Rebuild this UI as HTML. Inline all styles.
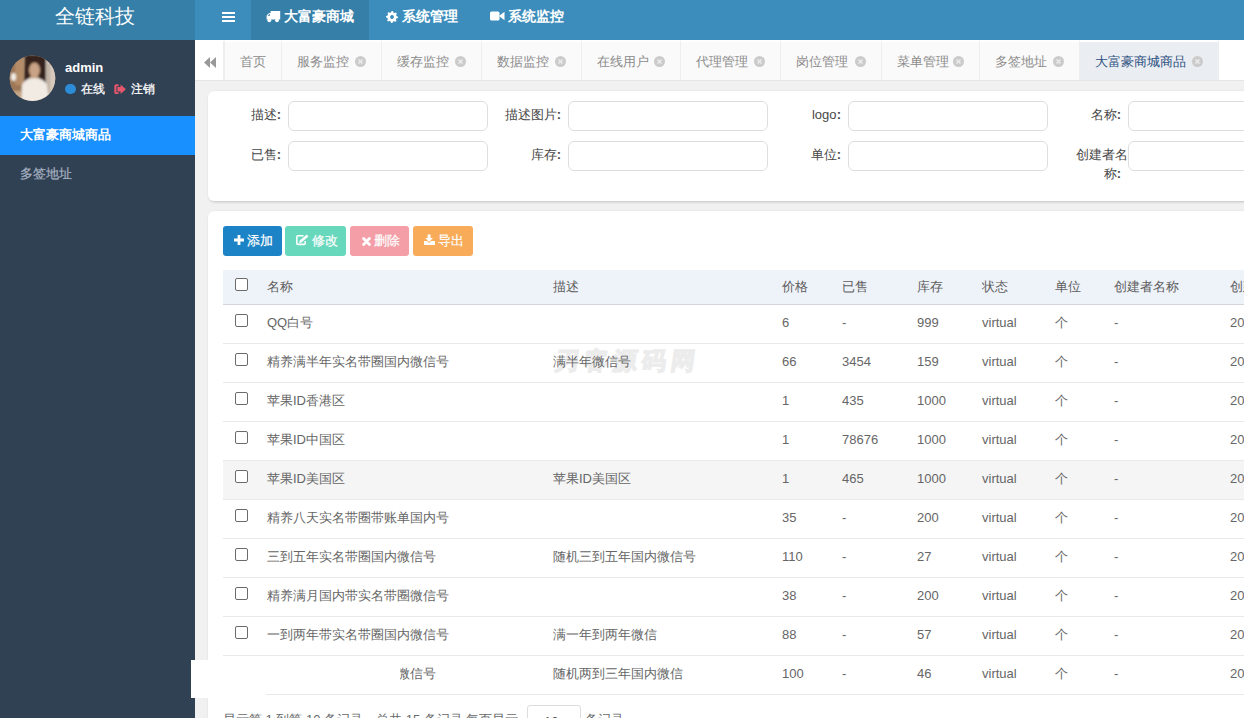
<!DOCTYPE html>
<html><head><meta charset="utf-8">
<style>
*{box-sizing:border-box;margin:0;padding:0}
html,body{width:1244px;height:718px;overflow:hidden;background:#f1f1f1;font-family:"Liberation Sans",sans-serif;font-size:13px;color:#676a6c}
.abs,.t{position:absolute;white-space:nowrap}
.t{line-height:20px}
.card{position:absolute;background:#fff;border-radius:6px;box-shadow:1px 1px 3px rgba(0,0,0,.2)}
.inp{position:absolute;width:200px;height:30px;border:1px solid #dedede;border-radius:6px;background:#fff}
.btn{position:absolute;top:226px;height:30px;border-radius:3px}
.cb{position:absolute;width:13px;height:13px;border:1px solid #6b6b6b;border-radius:2px;background:#fff}
.ln{position:absolute;left:223px;width:1021px;height:1px;background:#e7eaec}
.co{display:inline-block;width:4.5px;font-weight:bold;text-indent:0.3px}
.c{position:absolute;white-space:nowrap;color:#666;line-height:20px}
</style></head><body>

<div class="abs" style="left:0;top:0;width:195px;height:40px;background:#367fa9"></div>
<div class="t" style="left:55px;top:6px;font-size:20px;line-height:20px;color:#fff">全链科技</div>
<div class="abs" style="left:195px;top:0;width:1049px;height:40px;background:#3c8dbc"></div>
<div class="abs" style="left:222px;top:12px;width:13px;height:2px;background:#fff"></div>
<div class="abs" style="left:222px;top:16px;width:13px;height:2px;background:#fff"></div>
<div class="abs" style="left:222px;top:20px;width:13px;height:2px;background:#fff"></div>
<div class="abs" style="left:251px;top:0;width:118px;height:40px;background:#367fa9"></div>
<svg class="abs" style="left:266px;top:10px" width="15" height="13" viewBox="0 0 15 13"><g fill="#fff">
<rect x="4.6" y="1" width="9.6" height="8.6" rx="0.6"/>
<path d="M0.6 9.6 V6.2 Q0.6 5.4 1.2 4.8 L2.6 3.4 Q3.1 3 3.8 3 H5 V9.6 Z"/>
<circle cx="3.3" cy="10.3" r="1.9"/><circle cx="11" cy="10.3" r="1.9"/>
</g><path d="M1.6 5.8 L3 4.2 H4 V5.8 Z" fill="#367fa9"/></svg>
<div class="t" style="left:284px;top:6px;font-size:14px;font-weight:bold;color:#fff">大富豪商城</div>
<svg class="abs" style="left:386px;top:10.5px" width="12" height="12" viewBox="0 0 12 12"><path fill="#fff" fill-rule="evenodd" d="M5.71,0.01 L6.88,0.06 L7.55,1.67 L8.36,2.05 L10.03,1.55 L10.82,2.43 L10.16,4.03 L10.46,4.88 L11.99,5.71 L11.94,6.88 L10.33,7.55 L9.95,8.36 L10.45,10.03 L9.57,10.82 L7.97,10.16 L7.12,10.46 L6.29,11.99 L5.12,11.94 L4.45,10.33 L3.64,9.95 L1.97,10.45 L1.18,9.57 L1.84,7.97 L1.54,7.12 L0.01,6.29 L0.06,5.12 L1.67,4.45 L2.05,3.64 L1.55,1.97 L2.43,1.18 L4.03,1.84 L4.88,1.54 Z M6 4.1 A1.9 1.9 0 1 0 6.001 4.1 Z"/></svg>
<div class="t" style="left:402px;top:6px;font-size:14px;font-weight:bold;color:#fff">系统管理</div>
<svg class="abs" style="left:490px;top:11px" width="15" height="10" viewBox="0 0 15 10"><rect x="0" y="0.5" width="9.5" height="9" rx="1.6" fill="#fff"/><path d="M9 5 L14.5 0.8 V9.2 Z" fill="#fff"/></svg>
<div class="t" style="left:508px;top:6px;font-size:14px;font-weight:bold;color:#fff">系统监控</div>
<div class="abs" style="left:0;top:40px;width:195px;height:678px;background:#314154"></div>
<svg class="abs" style="left:9px;top:55px" width="47" height="47" viewBox="0 0 47 47">
<defs><clipPath id="av"><circle cx="23.5" cy="23.3" r="22.8"/></clipPath><filter id="bl"><feGaussianBlur stdDeviation="1.1"/></filter></defs>
<g clip-path="url(#av)"><rect width="47" height="47" fill="#b89677"/>
<g filter="url(#bl)">
<rect x="-2" y="-2" width="15" height="50" fill="#9c7656"/>
<rect x="6" y="4" width="8" height="26" fill="#b48c68"/>
<rect x="35" y="-2" width="14" height="50" fill="#d6cabe"/>
<rect x="38" y="8" width="3" height="30" fill="#bfb1a3"/>
<ellipse cx="4.5" cy="22" rx="2.5" ry="4" fill="#f2eee8"/>
<path d="M16 0 H37 V30 H33 Q31 20 25 20 Q19 20 18 30 H15 Z" fill="#34231a"/>
<ellipse cx="25.5" cy="15" rx="5.5" ry="7.5" fill="#c9a385"/>
<path d="M12 48 L13 30 Q16 23 25 23 Q35 23 38 30 L40 48 Z" fill="#f1ebe4"/>
<rect x="0" y="36" width="12" height="12" fill="#c5a486"/>
</g></g></svg>
<div class="t" style="left:65px;top:58px;font-size:13px;font-weight:bold;color:#fff">admin</div>
<div class="abs" style="left:65px;top:83.5px;width:10.5px;height:10.5px;border-radius:50%;background:#2d8cd7"></div>
<div class="t" style="left:81px;top:78.5px;font-size:12px;color:#fff;-webkit-text-stroke:0.25px #fff">在线</div>
<svg class="abs" style="left:113.5px;top:83.5px" width="13" height="10.5" viewBox="0 0 13 10.5"><g fill="#e8566c">
<path d="M0.3 2.2 Q0.3 0.2 2.3 0.2 H4.6 V2.2 H2.4 V8.2 H4.6 V10.2 H2.3 Q0.3 10.2 0.3 8.2 Z"/>
<path d="M3.4 2.9 H6.6 V0.4 L11.9 5.2 L6.6 10 V7.6 H3.4 Z"/></g></svg>
<div class="t" style="left:131px;top:78.5px;font-size:12px;color:#fff;-webkit-text-stroke:0.25px #fff">注销</div>
<div class="abs" style="left:0;top:116px;width:195px;height:39px;background:#1890ff"></div>
<div class="t" style="left:20px;top:125px;font-weight:bold;color:#fff">大富豪商城商品</div>
<div class="t" style="left:20px;top:164px;color:#a7b1c2;-webkit-text-stroke:0.2px #a7b1c2">多签地址</div>
<div class="abs" style="left:195px;top:40px;width:1049px;height:41px;background:#fff;border-bottom:1px solid #e5e5e5"></div>
<div class="abs" style="left:195px;top:41px;width:29px;height:39px;background:#fff;border-right:1px solid #eee"></div>
<svg class="abs" style="left:204px;top:57px" width="12" height="11" viewBox="0 0 12 11"><path fill="#999" d="M0 5.5 L6 0 V11 Z M6 5.5 L12 0 V11 Z"/></svg>
<div class="abs" style="left:225px;top:42px;width:56px;height:38px;background:#fafafa"></div>
<div class="t" style="left:240px;top:52px;color:#8c8c8c">首页</div>
<div class="abs" style="left:282px;top:42px;width:99px;height:38px;background:#fafafa"></div>
<div class="t" style="left:297px;top:52px;color:#8c8c8c">服务监控</div>
<svg class="abs" style="left:355px;top:56px" width="11" height="11" viewBox="0 0 11 11"><circle cx="5.5" cy="5.5" r="5.5" fill="#cbcbcb"/><path d="M3.5 3.5 L7.5 7.5 M7.5 3.5 L3.5 7.5" stroke="#ececec" stroke-width="1.5"/></svg>
<div class="abs" style="left:382px;top:42px;width:99px;height:38px;background:#fafafa"></div>
<div class="t" style="left:397px;top:52px;color:#8c8c8c">缓存监控</div>
<svg class="abs" style="left:455px;top:56px" width="11" height="11" viewBox="0 0 11 11"><circle cx="5.5" cy="5.5" r="5.5" fill="#cbcbcb"/><path d="M3.5 3.5 L7.5 7.5 M7.5 3.5 L3.5 7.5" stroke="#ececec" stroke-width="1.5"/></svg>
<div class="abs" style="left:482px;top:42px;width:99px;height:38px;background:#fafafa"></div>
<div class="t" style="left:497px;top:52px;color:#8c8c8c">数据监控</div>
<svg class="abs" style="left:555px;top:56px" width="11" height="11" viewBox="0 0 11 11"><circle cx="5.5" cy="5.5" r="5.5" fill="#cbcbcb"/><path d="M3.5 3.5 L7.5 7.5 M7.5 3.5 L3.5 7.5" stroke="#ececec" stroke-width="1.5"/></svg>
<div class="abs" style="left:582px;top:42px;width:98px;height:38px;background:#fafafa"></div>
<div class="t" style="left:597px;top:52px;color:#8c8c8c">在线用户</div>
<svg class="abs" style="left:654px;top:56px" width="11" height="11" viewBox="0 0 11 11"><circle cx="5.5" cy="5.5" r="5.5" fill="#cbcbcb"/><path d="M3.5 3.5 L7.5 7.5 M7.5 3.5 L3.5 7.5" stroke="#ececec" stroke-width="1.5"/></svg>
<div class="abs" style="left:681px;top:42px;width:99px;height:38px;background:#fafafa"></div>
<div class="t" style="left:696px;top:52px;color:#8c8c8c">代理管理</div>
<svg class="abs" style="left:754px;top:56px" width="11" height="11" viewBox="0 0 11 11"><circle cx="5.5" cy="5.5" r="5.5" fill="#cbcbcb"/><path d="M3.5 3.5 L7.5 7.5 M7.5 3.5 L3.5 7.5" stroke="#ececec" stroke-width="1.5"/></svg>
<div class="abs" style="left:781px;top:42px;width:100px;height:38px;background:#fafafa"></div>
<div class="t" style="left:796px;top:52px;color:#8c8c8c">岗位管理</div>
<svg class="abs" style="left:855px;top:56px" width="11" height="11" viewBox="0 0 11 11"><circle cx="5.5" cy="5.5" r="5.5" fill="#cbcbcb"/><path d="M3.5 3.5 L7.5 7.5 M7.5 3.5 L3.5 7.5" stroke="#ececec" stroke-width="1.5"/></svg>
<div class="abs" style="left:882px;top:42px;width:97px;height:38px;background:#fafafa"></div>
<div class="t" style="left:897px;top:52px;color:#8c8c8c">菜单管理</div>
<svg class="abs" style="left:953px;top:56px" width="11" height="11" viewBox="0 0 11 11"><circle cx="5.5" cy="5.5" r="5.5" fill="#cbcbcb"/><path d="M3.5 3.5 L7.5 7.5 M7.5 3.5 L3.5 7.5" stroke="#ececec" stroke-width="1.5"/></svg>
<div class="abs" style="left:980px;top:42px;width:99px;height:38px;background:#fafafa"></div>
<div class="t" style="left:995px;top:52px;color:#8c8c8c">多签地址</div>
<svg class="abs" style="left:1053px;top:56px" width="11" height="11" viewBox="0 0 11 11"><circle cx="5.5" cy="5.5" r="5.5" fill="#cbcbcb"/><path d="M3.5 3.5 L7.5 7.5 M7.5 3.5 L3.5 7.5" stroke="#ececec" stroke-width="1.5"/></svg>
<div class="abs" style="left:1080px;top:42px;width:138px;height:38px;background:#eaedf1"></div>
<div class="t" style="left:1095px;top:52px;color:#2b4f80">大富豪商城商品</div>
<svg class="abs" style="left:1192px;top:56px" width="11" height="11" viewBox="0 0 11 11"><circle cx="5.5" cy="5.5" r="5.5" fill="#cbcbcb"/><path d="M3.5 3.5 L7.5 7.5 M7.5 3.5 L3.5 7.5" stroke="#ececec" stroke-width="1.5"/></svg>
<div class="abs" style="left:1219px;top:41px;width:25px;height:39px;background:#fff"></div>
<div class="abs" style="left:224px;top:41px;width:1px;height:39px;background:#eee"></div>
<div class="abs" style="left:281px;top:41px;width:1px;height:39px;background:#eee"></div>
<div class="abs" style="left:381px;top:41px;width:1px;height:39px;background:#eee"></div>
<div class="abs" style="left:481px;top:41px;width:1px;height:39px;background:#eee"></div>
<div class="abs" style="left:581px;top:41px;width:1px;height:39px;background:#eee"></div>
<div class="abs" style="left:680px;top:41px;width:1px;height:39px;background:#eee"></div>
<div class="abs" style="left:780px;top:41px;width:1px;height:39px;background:#eee"></div>
<div class="abs" style="left:881px;top:41px;width:1px;height:39px;background:#eee"></div>
<div class="abs" style="left:979px;top:41px;width:1px;height:39px;background:#eee"></div>
<div class="abs" style="left:1079px;top:41px;width:1px;height:39px;background:#eee"></div>
<div class="abs" style="left:1218px;top:41px;width:1px;height:39px;background:#eee"></div>
<div class="card" style="left:208px;top:91px;width:1100px;height:110px"></div>
<div class="t" style="left:81px;width:200px;text-align:right;top:105px;color:#484848">描述<span class="co">:</span></div>
<div class="inp" style="left:288px;top:101px"></div>
<div class="t" style="left:361px;width:200px;text-align:right;top:105px;color:#484848">描述图片<span class="co">:</span></div>
<div class="inp" style="left:568px;top:101px"></div>
<div class="t" style="left:641px;width:200px;text-align:right;top:105px;color:#484848">logo<span class="co">:</span></div>
<div class="inp" style="left:848px;top:101px"></div>
<div class="t" style="left:921px;width:200px;text-align:right;top:105px;color:#484848">名称<span class="co">:</span></div>
<div class="inp" style="left:1128px;top:101px"></div>
<div class="t" style="left:81px;width:200px;text-align:right;top:145px;color:#484848">已售<span class="co">:</span></div>
<div class="inp" style="left:288px;top:141px"></div>
<div class="t" style="left:361px;width:200px;text-align:right;top:145px;color:#484848">库存<span class="co">:</span></div>
<div class="inp" style="left:568px;top:141px"></div>
<div class="t" style="left:641px;width:200px;text-align:right;top:145px;color:#484848">单位<span class="co">:</span></div>
<div class="inp" style="left:848px;top:141px"></div>
<div class="t" style="left:1076px;top:145px;color:#484848">创建者名</div>
<div class="t" style="left:1021px;width:100px;text-align:right;top:164px;color:#484848">称<span class="co">:</span></div>
<div class="inp" style="left:1128px;top:141px"></div>
<div class="card" style="left:208px;top:211px;width:1100px;height:620px"></div>
<div class="btn" style="left:223px;width:59px;background:#1c84c6"></div>
<svg class="abs" style="left:234px;top:235px" width="10" height="10" viewBox="0 0 10 10"><path fill="#fff" d="M3.6 0 H6.4 V3.6 H10 V6.4 H6.4 V10 H3.6 V6.4 H0 V3.6 H3.6 Z"/></svg>
<div class="t" style="left:247px;top:231px;color:#fff;-webkit-text-stroke:0.2px #fff">添加</div>
<div class="btn" style="left:285px;width:61px;background:#68d8bd"></div>
<svg class="abs" style="left:295px;top:234px" width="14" height="12" viewBox="0 0 14 12"><path fill="none" stroke="#fff" stroke-width="1.6" d="M8.5 1.8 H3 Q1.8 1.8 1.8 3 V9.2 Q1.8 10.4 3 10.4 H9 Q10.2 10.4 10.2 9.2 V7"/><path fill="none" stroke="#fff" stroke-width="2.6" d="M5.6 7.6 L12.6 1.6"/><path fill="#fff" d="M4.2 9.2 L4.6 6.6 L6.6 8.4 Z"/></svg>
<div class="t" style="left:312px;top:231px;color:#fff;-webkit-text-stroke:0.2px #fff">修改</div>
<div class="btn" style="left:350px;width:59px;background:#f49ea7"></div>
<svg class="abs" style="left:361.5px;top:236.5px" width="9" height="9" viewBox="0 0 9 9"><path stroke="#fff" stroke-width="2.8" stroke-linecap="round" d="M1.6 1.6 L7.4 7.4 M7.4 1.6 L1.6 7.4"/></svg>
<div class="t" style="left:374px;top:231px;color:#fff;-webkit-text-stroke:0.2px #fff">删除</div>
<div class="btn" style="left:413px;width:60px;background:#f8ac59"></div>
<svg class="abs" style="left:424px;top:234px" width="11" height="11" viewBox="0 0 11 11"><path fill="#fff" d="M3.6 0.4 H6.6 V4 H9 L5.1 8 L1.2 4 H3.6 Z M0 7 H3 L5.1 9.1 L7.2 7 H11 V11 H0 Z"/></svg>
<div class="t" style="left:438px;top:231px;color:#fff;-webkit-text-stroke:0.2px #fff">导出</div>
<div class="abs" style="left:223px;top:270px;width:1021px;height:34px;background:#eef2f9"></div>
<div class="abs" style="left:223px;top:304px;width:1021px;height:1px;background:#d2d6da"></div>
<div class="cb" style="left:235px;top:278px"></div>
<div class="c" style="left:267px;top:276.5px;color:#5e5e5e">名称</div>
<div class="c" style="left:553px;top:276.5px;color:#5e5e5e">描述</div>
<div class="c" style="left:782px;top:276.5px;color:#5e5e5e">价格</div>
<div class="c" style="left:842px;top:276.5px;color:#5e5e5e">已售</div>
<div class="c" style="left:917px;top:276.5px;color:#5e5e5e">库存</div>
<div class="c" style="left:982px;top:276.5px;color:#5e5e5e">状态</div>
<div class="c" style="left:1055px;top:276.5px;color:#5e5e5e">单位</div>
<div class="c" style="left:1114px;top:276.5px;color:#5e5e5e">创建者名称</div>
<div class="c" style="left:1230px;top:276.5px;color:#5e5e5e">创建时间</div>
<div class="t" style="left:553px;top:347px;font-size:24px;line-height:28px;font-weight:bold;transform:skewX(-8deg);transform-origin:0 100%;color:#ececec;-webkit-text-stroke:1.3px #ececec;letter-spacing:5px">刃客源码网</div>
<div class="ln" style="top:343px"></div>
<div class="cb" style="left:235px;top:314px"></div>
<div class="c" style="left:267px;top:313px">QQ白号</div>
<div class="c" style="left:782px;top:313px">6</div>
<div class="c" style="left:842px;top:313px">-</div>
<div class="c" style="left:917px;top:313px">999</div>
<div class="c" style="left:982px;top:313px">virtual</div>
<div class="c" style="left:1055px;top:313px">个</div>
<div class="c" style="left:1114px;top:313px">-</div>
<div class="c" style="left:1230px;top:313px">2021</div>
<div class="ln" style="top:382px"></div>
<div class="cb" style="left:235px;top:353px"></div>
<div class="c" style="left:267px;top:352px">精养满半年实名带圈国内微信号</div>
<div class="c" style="left:553px;top:352px">满半年微信号</div>
<div class="c" style="left:782px;top:352px">66</div>
<div class="c" style="left:842px;top:352px">3454</div>
<div class="c" style="left:917px;top:352px">159</div>
<div class="c" style="left:982px;top:352px">virtual</div>
<div class="c" style="left:1055px;top:352px">个</div>
<div class="c" style="left:1114px;top:352px">-</div>
<div class="c" style="left:1230px;top:352px">2021</div>
<div class="ln" style="top:421px"></div>
<div class="cb" style="left:235px;top:392px"></div>
<div class="c" style="left:267px;top:391px">苹果ID香港区</div>
<div class="c" style="left:782px;top:391px">1</div>
<div class="c" style="left:842px;top:391px">435</div>
<div class="c" style="left:917px;top:391px">1000</div>
<div class="c" style="left:982px;top:391px">virtual</div>
<div class="c" style="left:1055px;top:391px">个</div>
<div class="c" style="left:1114px;top:391px">-</div>
<div class="c" style="left:1230px;top:391px">2021</div>
<div class="ln" style="top:460px"></div>
<div class="cb" style="left:235px;top:431px"></div>
<div class="c" style="left:267px;top:430px">苹果ID中国区</div>
<div class="c" style="left:782px;top:430px">1</div>
<div class="c" style="left:842px;top:430px">78676</div>
<div class="c" style="left:917px;top:430px">1000</div>
<div class="c" style="left:982px;top:430px">virtual</div>
<div class="c" style="left:1055px;top:430px">个</div>
<div class="c" style="left:1114px;top:430px">-</div>
<div class="c" style="left:1230px;top:430px">2021</div>
<div class="abs" style="left:223px;top:461px;width:1021px;height:38px;background:#f5f5f5"></div>
<div class="ln" style="top:499px"></div>
<div class="cb" style="left:235px;top:470px"></div>
<div class="c" style="left:267px;top:469px">苹果ID美国区</div>
<div class="c" style="left:553px;top:469px">苹果ID美国区</div>
<div class="c" style="left:782px;top:469px">1</div>
<div class="c" style="left:842px;top:469px">465</div>
<div class="c" style="left:917px;top:469px">1000</div>
<div class="c" style="left:982px;top:469px">virtual</div>
<div class="c" style="left:1055px;top:469px">个</div>
<div class="c" style="left:1114px;top:469px">-</div>
<div class="c" style="left:1230px;top:469px">2021</div>
<div class="ln" style="top:538px"></div>
<div class="cb" style="left:235px;top:509px"></div>
<div class="c" style="left:267px;top:508px">精养八天实名带圈带账单国内号</div>
<div class="c" style="left:782px;top:508px">35</div>
<div class="c" style="left:842px;top:508px">-</div>
<div class="c" style="left:917px;top:508px">200</div>
<div class="c" style="left:982px;top:508px">virtual</div>
<div class="c" style="left:1055px;top:508px">个</div>
<div class="c" style="left:1114px;top:508px">-</div>
<div class="c" style="left:1230px;top:508px">2021</div>
<div class="ln" style="top:577px"></div>
<div class="cb" style="left:235px;top:548px"></div>
<div class="c" style="left:267px;top:547px">三到五年实名带圈国内微信号</div>
<div class="c" style="left:553px;top:547px">随机三到五年国内微信号</div>
<div class="c" style="left:782px;top:547px">110</div>
<div class="c" style="left:842px;top:547px">-</div>
<div class="c" style="left:917px;top:547px">27</div>
<div class="c" style="left:982px;top:547px">virtual</div>
<div class="c" style="left:1055px;top:547px">个</div>
<div class="c" style="left:1114px;top:547px">-</div>
<div class="c" style="left:1230px;top:547px">2021</div>
<div class="ln" style="top:616px"></div>
<div class="cb" style="left:235px;top:587px"></div>
<div class="c" style="left:267px;top:586px">精养满月国内带实名带圈微信号</div>
<div class="c" style="left:782px;top:586px">38</div>
<div class="c" style="left:842px;top:586px">-</div>
<div class="c" style="left:917px;top:586px">200</div>
<div class="c" style="left:982px;top:586px">virtual</div>
<div class="c" style="left:1055px;top:586px">个</div>
<div class="c" style="left:1114px;top:586px">-</div>
<div class="c" style="left:1230px;top:586px">2021</div>
<div class="ln" style="top:655px"></div>
<div class="cb" style="left:235px;top:626px"></div>
<div class="c" style="left:267px;top:625px">一到两年带实名带圈国内微信号</div>
<div class="c" style="left:553px;top:625px">满一年到两年微信</div>
<div class="c" style="left:782px;top:625px">88</div>
<div class="c" style="left:842px;top:625px">-</div>
<div class="c" style="left:917px;top:625px">57</div>
<div class="c" style="left:982px;top:625px">virtual</div>
<div class="c" style="left:1055px;top:625px">个</div>
<div class="c" style="left:1114px;top:625px">-</div>
<div class="c" style="left:1230px;top:625px">2021</div>
<div class="ln" style="top:694px"></div>
<div class="cb" style="left:235px;top:665px"></div>
<div class="c" style="left:267px;top:664px">三到五年实名带圈国内微信号</div>
<div class="c" style="left:553px;top:664px">随机两到三年国内微信</div>
<div class="c" style="left:782px;top:664px">100</div>
<div class="c" style="left:842px;top:664px">-</div>
<div class="c" style="left:917px;top:664px">46</div>
<div class="c" style="left:982px;top:664px">virtual</div>
<div class="c" style="left:1055px;top:664px">个</div>
<div class="c" style="left:1114px;top:664px">-</div>
<div class="c" style="left:1230px;top:664px">2021</div>
<div class="c" style="left:223px;top:710px;color:#676a6c">显示第 1 到第 10 条记录，总共 15 条记录 每页显示</div>
<div class="abs" style="left:527px;top:705px;width:54px;height:30px;border:1px solid #ddd;border-radius:3px;background:#fff"></div>
<div class="c" style="left:544px;top:712px;color:#555">10</div>
<div class="c" style="left:585px;top:710px;color:#676a6c">条记录</div>
<div class="abs" style="left:191px;top:660px;width:209px;height:34px;background:#fff"></div>
<div class="abs" style="left:191px;top:694px;width:75px;height:4px;background:#fff"></div>
</body></html>
